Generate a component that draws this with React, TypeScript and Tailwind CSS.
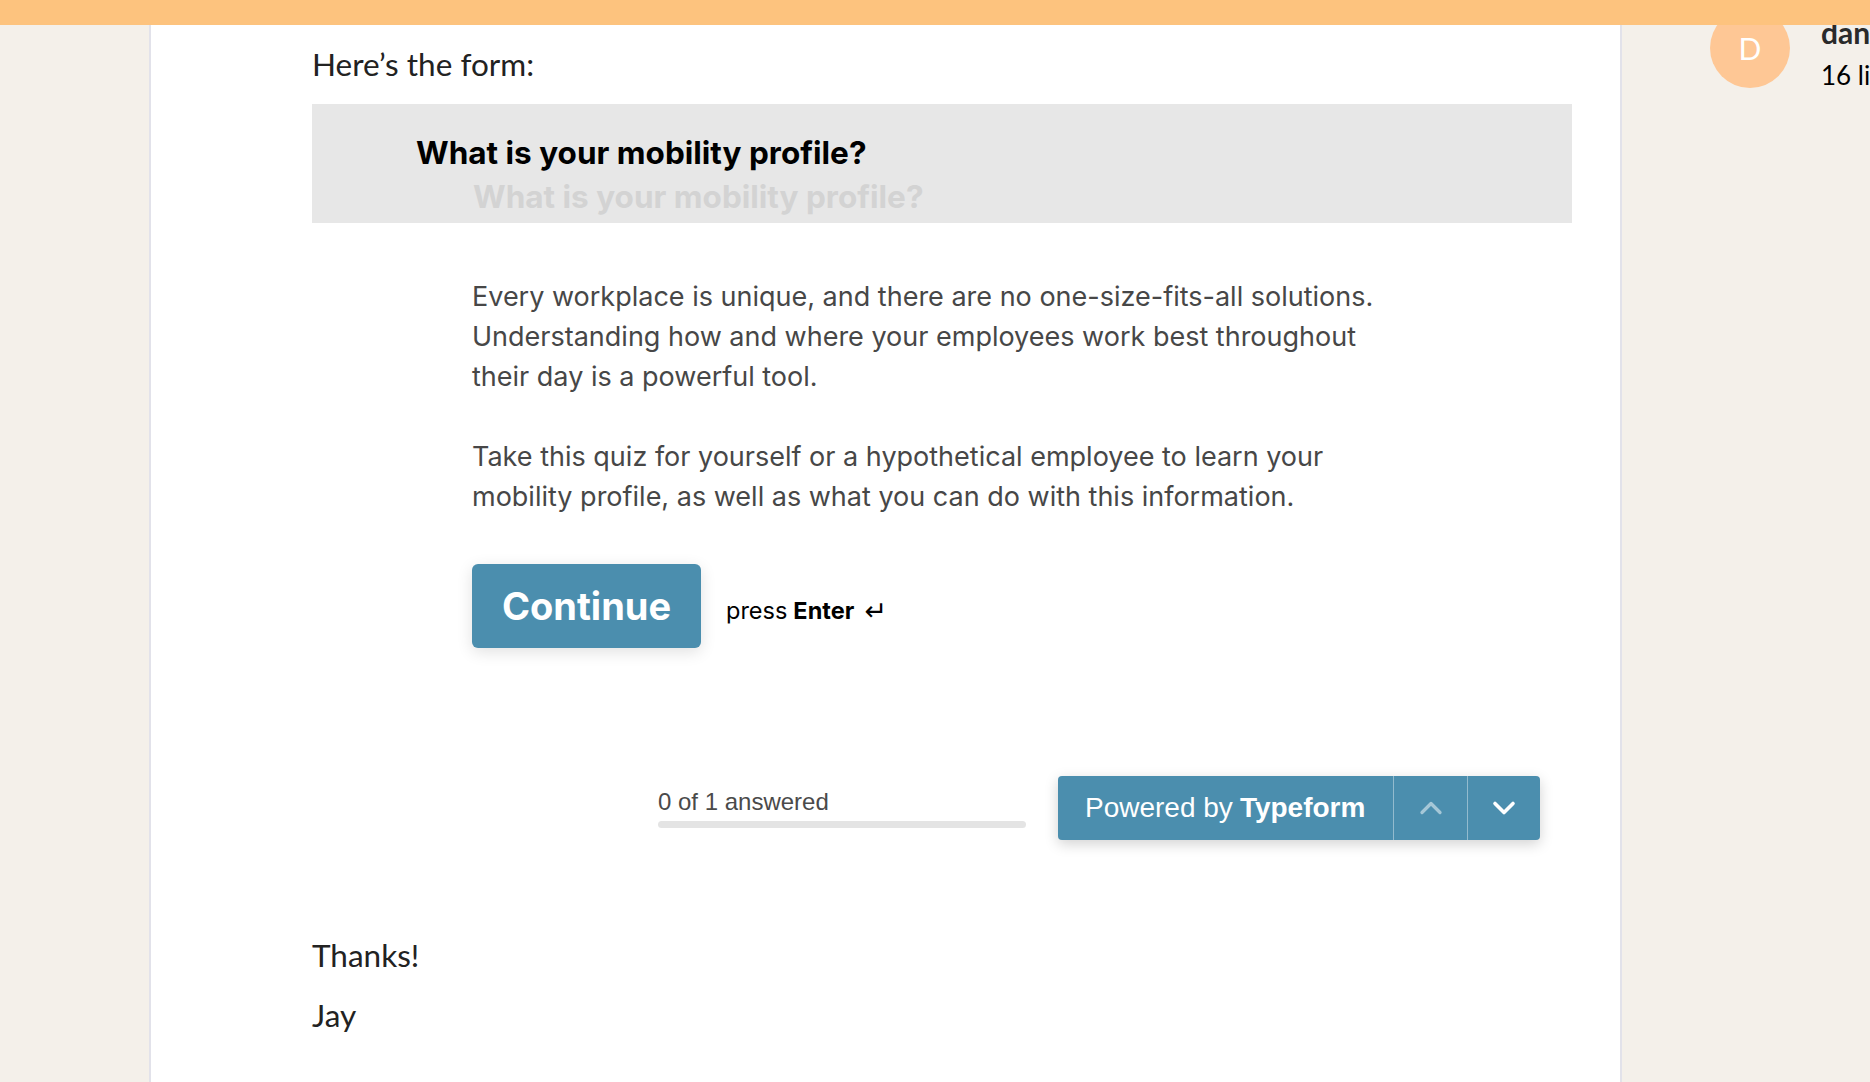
import { ChevronUp, ChevronDown } from "lucide-react";

const body = { fontFamily: "Inter, 'Noto Sans', sans-serif" };
const page = { fontFamily: "Lato, 'Open Sans', sans-serif" };
const helv = { fontFamily: "'Liberation Sans', Arial, sans-serif" };

function TypeformEmbed() {
  return (
    <div className="w-[1260px]" style={body}>
      {/* question header */}
      <div className="h-[119px] overflow-hidden bg-[#e7e7e7] pl-[104px] pt-[31px]">
        <div className="text-[31.5px] font-bold leading-[36px] text-black">What is your mobility profile?</div>
        <div className="mt-[8px] pl-[57px] text-[31.5px] font-bold leading-[36px] text-[#d3d3d3]">
          What is your mobility profile?
        </div>
      </div>

      <div className="pl-[160px] pt-[54px]">
        <div className="w-[930px] text-[27px] leading-[40px] text-[#474747]">
          <p>
            Every workplace is unique, and there are no one-size-fits-all solutions. Understanding how and where your
            employees work best throughout their day is a powerful tool.
          </p>
          <p className="mt-[40px]">
            Take this quiz for yourself or a hypothetical employee to learn your mobility profile, as well as what you
            can do with this information.
          </p>
        </div>

        <div className="mt-[47px] flex items-center gap-[25px]">
          <button className="h-[84px] w-[229px] rounded-[6px] bg-[#4b8eae] text-[38px] font-bold text-white shadow-[0_4px_16px_rgba(0,0,0,0.12)]">
            Continue
          </button>
          <div className="mt-[9px] flex items-center text-[23.5px] text-black">
            press <span className="ml-[6px] font-bold">Enter</span>
            <span className="ml-[10px] text-[27px] leading-none" style={{ fontFamily: "'DejaVu Sans', sans-serif" }}>
              ↵
            </span>
          </div>
        </div>
      </div>

      {/* footer */}
      <div className="mt-[128px] flex items-center justify-end gap-[32px] pr-[32px]" style={helv}>
        <div className="w-[368px]">
          <div className="text-[24px] leading-[26px] text-[#4a4a4a]">0 of 1 answered</div>
          <div className="mt-[6px] h-[7px] w-full rounded-full bg-[#e4e4e4]" />
        </div>
        <div className="flex h-[64px] w-[482px] overflow-hidden rounded-[4px] bg-[#4b8eae] text-white shadow-[0_4px_14px_rgba(0,0,0,0.18)]">
          <div className="flex w-[335px] items-center pl-[27px] text-[28px]">
            Powered by <span className="ml-[7px] font-bold">Typeform</span>
          </div>
          <div className="flex w-[74px] items-center justify-center border-l border-white/40">
            <ChevronUp size={36} strokeWidth={2.2} className="text-white/50" />
          </div>
          <div className="flex flex-1 items-center justify-center border-l border-white/40">
            <ChevronDown size={36} strokeWidth={2.4} className="text-white" />
          </div>
        </div>
      </div>
    </div>
  );
}

export default function App() {
  return (
    <div className="relative flex h-[1082px] w-[1870px] overflow-hidden bg-[#f4f0ea]" style={page}>
      {/* top bar over content */}
      <div className="absolute left-0 right-0 top-0 z-10 h-[25px] bg-[#fdc37e]" />

      <div className="w-[151px] shrink-0 border-r-2 border-[#e2e2ea]" />

      <main className="w-[1469px] shrink-0 bg-white pl-[161px] pr-[45px] text-[#222]">
        <p className="mt-[44px] text-[31.5px] leading-[40px]">Here’s the form:</p>
        <div className="mt-[20px]">
          <TypeformEmbed />
        </div>
        <p className="mt-[95px] text-[31.5px] leading-[40px]">Thanks!</p>
        <p className="mt-[20px] text-[31.5px] leading-[40px]">Jay</p>
      </main>

      <aside className="flex-1 border-l-2 border-[#e2e2ea] pl-[88px] pt-[8px]">
        <div className="flex gap-[31px]">
          <div className="flex h-[80px] w-[80px] shrink-0 items-center justify-center rounded-full bg-[#fec795] text-[30px] text-white">
            D
          </div>
          <div className="whitespace-nowrap pt-[7px]">
            <div className="text-[30px] font-bold leading-[34px] text-[#2a2a2a]">dan</div>
            <div className="mt-[11px] text-[26px] leading-[30px] text-black">16 lik</div>
          </div>
        </div>
      </aside>
    </div>
  );
}
